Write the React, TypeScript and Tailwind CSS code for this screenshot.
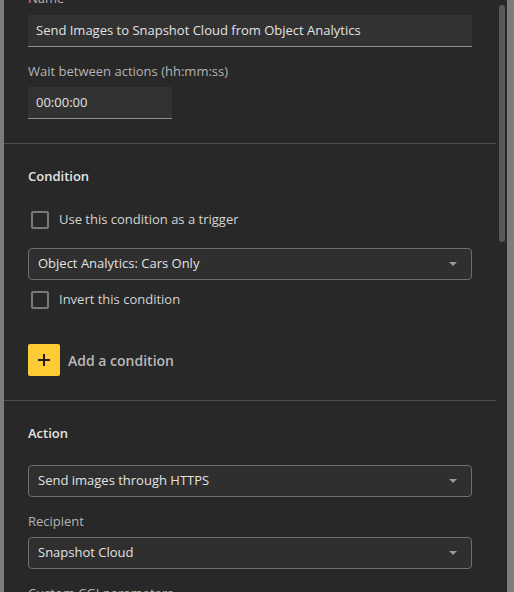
import React from "react";

const font = { fontFamily: '"Open Sans", "Noto Sans", sans-serif' };

const Label = ({ children }: { children: React.ReactNode }) => (
    <div className="text-[13px] leading-[18px] text-[#b4b4b4]">{children}</div>
);

const TextInput = ({ value, className }: { value: string; className?: string }) => (
    <div className={`h-[32px] bg-[#323232] border-b border-[#8c8c8c] flex items-center px-2 text-[13px] text-[#e2e2e2] ${className ?? ""}`}>
        {value}
    </div>
);

const Select = ({ value, className }: { value: string; className?: string }) => (
    <div className={`h-[32px] w-[444px] rounded-[4px] border border-[#6f6f6f] bg-[#2f2f2f] flex items-center justify-between pl-[9px] pr-[13px] text-[13px] text-[#e2e2e2] ${className ?? ""}`}>
        <span>{value}</span>
        <svg width="10" height="6" viewBox="0 0 10 6">
            <path d="M1 1 L9 1 L5 5 Z" fill="#9a9a9a" />
        </svg>
    </div>
);

const Checkbox = ({ label, className }: { label: string; className?: string }) => (
    <div className={`flex items-center h-[18px] ${className ?? ""}`}>
        <div className="ml-[3px] w-[18px] h-[18px] rounded-[2px] border-2 border-[#7a7a7a]" />
        <span className="ml-[10px] text-[13px] text-[#d4d4d4]">{label}</span>
    </div>
);

const Heading = ({ children }: { children: React.ReactNode }) => (
    <div className="text-[13px] leading-[18px] font-semibold text-[#e4e4e4]">{children}</div>
);

export default function App() {
    return (
        <div className="w-[514px] h-[592px] overflow-hidden bg-[#7c7c7c] flex" style={font}>
            <div className="ml-[4px] w-[503px] h-full bg-[#282828] flex overflow-hidden">
                <div className="w-[492px] flex flex-col">
                    {/* general */}
                    <div className="px-6 pb-6 mt-[-11px] border-b border-[#4e4e4e]">
                        <Label>Name</Label>
                        <TextInput className="mt-[8px]" value="Send Images to Snapshot Cloud from Object Analytics" />
                        <div className="mt-[15px]">
                            <Label>Wait between actions (hh:mm:ss)</Label>
                        </div>
                        <TextInput className="mt-[7px] w-[144px]" value="00:00:00" />
                    </div>

                    {/* condition */}
                    <div className="px-6 pt-[23px] pb-6 border-b border-[#4e4e4e]">
                        <Heading>Condition</Heading>
                        <Checkbox className="mt-[26px]" label="Use this condition as a trigger" />
                        <Select className="mt-[19px]" value="Object Analytics: Cars Only" />
                        <Checkbox className="mt-[11px]" label="Invert this condition" />
                        <div className="mt-[35px] flex items-center">
                            <div className="w-[32px] h-[32px] rounded-[2px] bg-[#fecb35] flex items-center justify-center">
                                <svg width="14" height="14" viewBox="0 0 14 14">
                                    <path d="M7 1 V13 M1 7 H13" stroke="#1e1e1e" strokeWidth="2" />
                                </svg>
                            </div>
                            <span className="ml-[8px] text-[14px] font-semibold text-[#b9b9b9]">Add a condition</span>
                        </div>
                    </div>

                    {/* action */}
                    <div className="px-6 pt-[23px]">
                        <Heading>Action</Heading>
                        <Select className="mt-[23px]" value="Send images through HTTPS" />
                        <div className="mt-[15px]">
                            <Label>Recipient</Label>
                        </div>
                        <Select className="mt-[7px]" value="Snapshot Cloud" />
                        <div className="mt-[15px]">
                            <Label>Custom CGI parameters</Label>
                        </div>
                    </div>
                </div>

                {/* scrollbar */}
                <div className="w-[11px] pl-[3px] pt-[5px]">
                    <div className="w-[6px] h-[237px] rounded-full bg-[#595959]" />
                </div>
            </div>
        </div>
    );
}
